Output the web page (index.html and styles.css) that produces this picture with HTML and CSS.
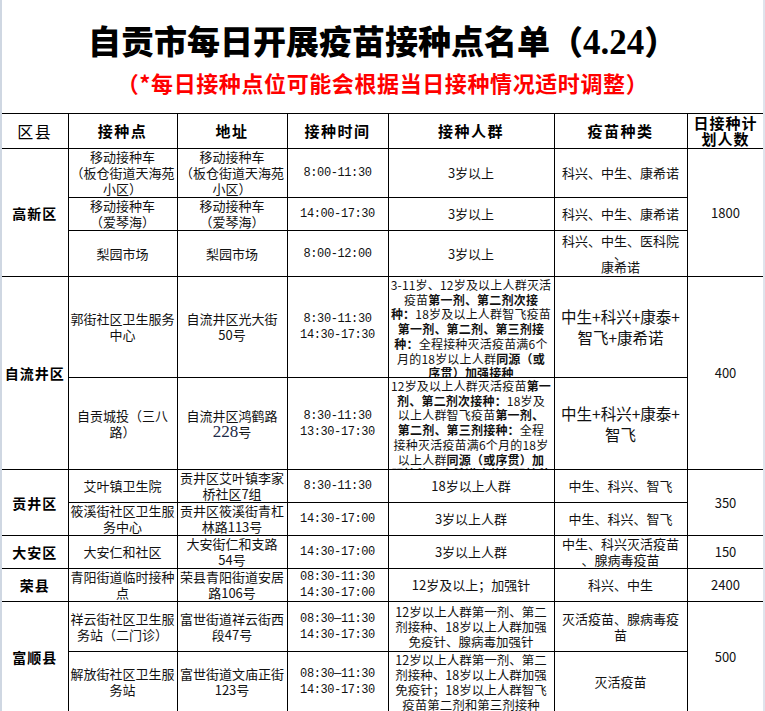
FILE: index.html
```html
<!DOCTYPE html>
<html lang="zh-CN">
<head>
<meta charset="utf-8">
<title>自贡市每日开展疫苗接种点名单（4.24）</title>
<link rel="stylesheet" href="styles.css">
</head>
<body>
<div class="page">
  <header class="head">
    <h1 class="title">自贡市每日开展疫苗接种点名单（<span class="num">4.24</span>）</h1>
    <p class="sub">（*每日接种点位可能会根据当日接种情况适时调整）</p>
  </header>
  <table class="sched">
    <colgroup>
      <col class="c1"><col class="c2"><col class="c3"><col class="c4"><col class="c5"><col class="c6"><col class="c7">
    </colgroup>
    <thead>
      <tr class="h-head">
        <th class="th-plain">区县</th>
        <th>接种点</th>
        <th>地址</th>
        <th>接种时间</th>
        <th>接种人群</th>
        <th>疫苗种类</th>
        <th class="th-plan">日接种计<br>划人数</th>
      </tr>
    </thead>
    <tbody>
      <tr class="h48">
        <td rowspan="3" class="dist">高新区</td>
        <td>移动接种车<br>（板仓街道天海苑<br>小区）</td>
        <td>移动接种车<br>（板仓街道天海苑<br>小区）</td>
        <td class="time">8:00-11:30</td>
        <td>3岁以上</td>
        <td>科兴、中生、康希诺</td>
        <td rowspan="3">1800</td>
      </tr>
      <tr class="h32">
        <td>移动接种车<br>（爱琴海）</td>
        <td>移动接种车<br>（爱琴海）</td>
        <td class="time">14:00-17:30</td>
        <td>3岁以上</td>
        <td>科兴、中生、康希诺</td>
      </tr>
      <tr class="h47">
        <td>梨园市场</td>
        <td>梨园市场</td>
        <td class="time">8:00-12:00</td>
        <td>3岁以上</td>
        <td class="tight">科兴、中生、医科院<br>、<br>康希诺</td>
      </tr>
      <tr class="h102">
        <td rowspan="2" class="dist">自流井区</td>
        <td>郭街社区卫生服务<br>中心</td>
        <td>自流井区光大街<br>50号</td>
        <td class="time">8:30-11:30<br>14:30-17:30</td>
        <td class="crowd-cell"><div class="crowd crowd-a">3-11岁、12岁及以上人群灭活<br>疫苗<b>第一剂、第二剂次接</b><br><b>种：</b>18岁及以上人群智飞疫苗<br><b>第一剂、第二剂、第三剂接</b><br><b>种：</b>全程接种灭活疫苗满6个<br>月的18岁以上人群<b>同源（或</b><br><b>序贯）加强接种</b></div></td>
        <td class="big">中生+科兴+康泰+<br>智飞+康希诺</td>
        <td rowspan="2">400</td>
      </tr>
      <tr class="h93">
        <td>自贡城投（三八<br>路）</td>
        <td>自流井区鸿鹤路<br><span class="serif">228</span>号</td>
        <td class="time">8:30-11:30<br>13:30-17:30</td>
        <td class="crowd-cell"><div class="crowd crowd-b">12岁及以上人群灭活疫苗<b>第一</b><br><b>剂、第二剂次接种：</b>18岁及<br>以上人群智飞疫苗<b>第一剂、</b><br><b>第二剂、第三剂接种：</b>全程<br>接种灭活疫苗满6个月的18岁<br>以上人群<b>同源（或序贯）加</b><br><b>强接种，康希诺疫苗加强接种</b></div></td>
        <td class="big">中生+科兴+康泰+<br>智飞</td>
      </tr>
      <tr class="h31">
        <td rowspan="2" class="dist">贡井区</td>
        <td>艾叶镇卫生院</td>
        <td>贡井区艾叶镇李家<br>桥社区7组</td>
        <td class="time">8:30-11:30</td>
        <td>18岁以上人群</td>
        <td>中生、科兴、智飞</td>
        <td rowspan="2">350</td>
      </tr>
      <tr class="h32">
        <td>筱溪街社区卫生服<br>务中心</td>
        <td>贡井区筱溪街青杠<br>林路113号</td>
        <td class="time">14:30-17:00</td>
        <td>3岁以上人群</td>
        <td>中生、科兴、智飞</td>
      </tr>
      <tr class="h32">
        <td class="dist">大安区</td>
        <td>大安仁和社区</td>
        <td>大安街仁和支路<br>54号</td>
        <td class="time">14:30-17:00</td>
        <td>3岁以上人群</td>
        <td>中生、科兴灭活疫苗<br>、腺病毒疫苗</td>
        <td>150</td>
      </tr>
      <tr class="h32">
        <td class="dist">荣县</td>
        <td>青阳街道临时接种<br>点</td>
        <td>荣县青阳街道安居<br>路106号</td>
        <td class="time">08:30-11:30<br>14:30-17:00</td>
        <td>12岁及以上；加强针</td>
        <td>科兴、中生</td>
        <td>2400</td>
      </tr>
      <tr class="h51">
        <td rowspan="2" class="dist">富顺县</td>
        <td>祥云街社区卫生服<br>务站（二门诊）</td>
        <td>富世街道祥云街西<br>段47号</td>
        <td class="time">08:30—11:30<br>14:30-17:30</td>
        <td class="lh15">12岁以上人群第一剂、第二<br>剂接种、18岁以上人群加强<br>免疫针、腺病毒加强针</td>
        <td>灭活疫苗、腺病毒疫<br>苗</td>
        <td rowspan="2">500</td>
      </tr>
      <tr class="h61">
        <td>解放街社区卫生服<br>务站</td>
        <td>富世街道文庙正街<br>123号</td>
        <td class="time">08:30—11:30<br>14:30-17:30</td>
        <td class="lh15">12岁以上人群第一剂、第二<br>剂接种、18岁以上人群加强<br>免疫针；18岁以上人群智飞<br>疫苗第二剂和第三剂接种</td>
        <td>灭活疫苗</td>
      </tr>
    </tbody>
  </table>
</div>
</body>
</html>
```

FILE: styles.css
```css
html, body {
  margin: 0;
  padding: 0;
  background: #ffffff;
}

body {
  font-family: "Noto Sans CJK SC", "Noto Sans", sans-serif;
  color: #000;
}

.page {
  width: 765px;
  height: 711px;
  box-sizing: border-box;
  border-left: 2px solid #cfd7e2;
  border-right: 2px solid #dfe4ec;
  overflow: hidden;
  background: #fff;
}

.head {
  height: 113px;
  box-sizing: border-box;
  padding-top: 19px;
  text-align: center;
}

.title {
  margin: 0;
  font-size: 33px;
  line-height: 42px;
  font-weight: 900;
  letter-spacing: 0;
}

.title .num {
  font-family: "Liberation Serif", serif;
  font-weight: 700;
  font-size: 35px;
}

.sub {
  margin: 5px 0 0;
  font-size: 22px;
  line-height: 26px;
  font-weight: 700;
  letter-spacing: 0.6px;
  color: #ff0000;
}

.sched {
  border-collapse: collapse;
  table-layout: fixed;
  width: 762px;
  font-size: 13px;
  line-height: 16px;
}

.c1 { width: 66px; }
.c2 { width: 109px; }
.c3 { width: 110px; }
.c4 { width: 101px; }
.c5 { width: 166px; }
.c6 { width: 133px; }
.c7 { width: 77px; }

.sched th,
.sched td {
  border: 1px solid #000;
  padding: 0 2px;
  text-align: center;
  vertical-align: middle;
  white-space: nowrap;
  overflow: hidden;
  color: #111;
}

.sched tr > :first-child {
  border-left: none;
}

.sched th {
  font-size: 15px;
  font-weight: 700;
  letter-spacing: 1.5px;
  color: #000;
}

.sched th.th-plain {
  font-weight: 400;
  font-size: 16px;
}

.sched th.th-plan {
  line-height: 16px;
  letter-spacing: 1px;
}

.h-head { height: 35px; }
.h31 { height: 30px; }
.h32 { height: 31px; }
.h47 { height: 46px; }
.h48 { height: 47px; }
.h51 { height: 50px; }
.h61 { height: 60px; }
.h93 { height: 92px; }
.h102 { height: 101px; }

.sched td.dist {
  font-weight: 700;
  font-size: 14px;
  letter-spacing: 1px;
  color: #000;
}

.sched td.time {
  font-family: "Liberation Mono", "DejaVu Sans Mono", monospace;
  font-size: 12px;
  letter-spacing: -0.4px;
  line-height: 16px;
}

.sched td.tight {
  line-height: 13px;
}

.sched td.big {
  font-size: 15.5px;
  line-height: 21px;
}

.sched td.lh15 {
  line-height: 15px;
  font-size: 12.5px;
}

.sched td.crowd-cell {
  vertical-align: top;
  padding: 0;
}

.crowd {
  font-size: 12px;
  line-height: 14.7px;
  letter-spacing: 0.2px;
  overflow: hidden;
  padding-top: 1px;
  box-sizing: border-box;
}

.crowd b {
  font-weight: 700;
}

.crowd-a { height: 100px; }
.crowd-b { height: 91px; }

.serif {
  font-family: "Liberation Serif", serif;
  font-size: 17px;
  color: #1c2a48;
}
```
